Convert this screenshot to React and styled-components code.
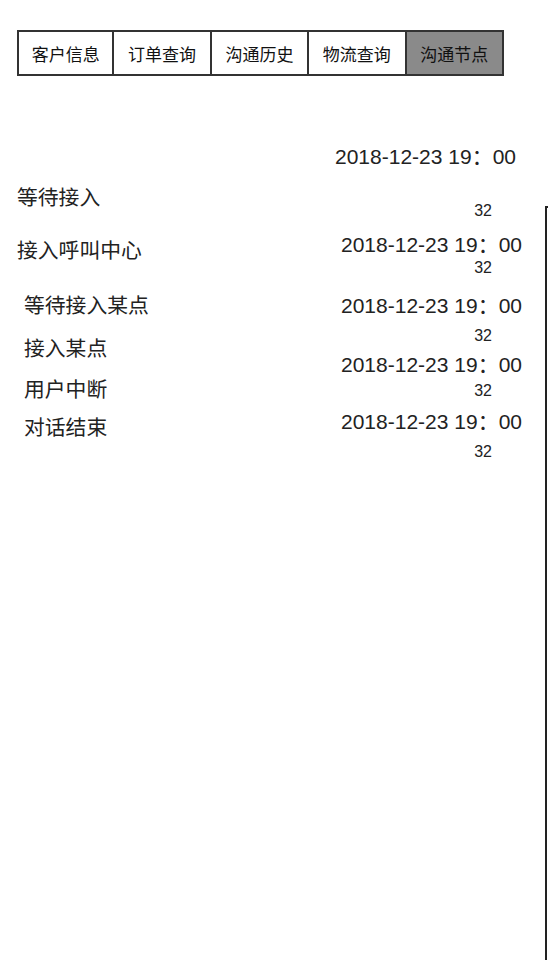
import React from "react";
import styled, { createGlobalStyle } from "styled-components";

const GlobalStyle = createGlobalStyle`
  html, body {
    margin: 0;
    padding: 0;
    background: #fff;
  }
  body {
    font-family: "Liberation Sans", "Noto Sans CJK SC", sans-serif;
    color: #222;
  }
`;

const Page = styled.div`
  display: flex;
  width: 548px;
  min-height: 960px;
  overflow: hidden;
`;

const Main = styled.div`
  width: 545px;
  flex-shrink: 0;
  padding-top: 30px;
  box-sizing: border-box;
`;

const SidePanel = styled.div`
  flex: 1;
  margin-top: 206px;
  border-left: 2px solid #222;
  border-top: 2px solid #222;
`;

const Tabs = styled.div`
  display: flex;
  margin-left: 17px;
`;

const Tab = styled.div`
  width: 97.4px;
  height: 46px;
  box-sizing: border-box;
  display: flex;
  align-items: center;
  justify-content: center;
  border: 2px solid #333;
  border-left: ${(p) => (p.$first ? "2px solid #333" : "none")};
  background: ${(p) => (p.$active ? "#8a8a8a" : "#fff")};
  font-family: "Noto Sans CJK SC", sans-serif;
  font-size: 17px;
  color: #111;
`;

const Timeline = styled.div`
  display: flex;
  justify-content: space-between;
  margin-top: 64px;
  padding-right: 23px;
`;

const Labels = styled.div`
  display: flex;
  flex-direction: column;
`;

const Label = styled.div`
  margin-top: ${(p) => p.$top}px;
  padding-left: ${(p) => (p.$indent ? 24 : 17)}px;
  font-family: "Noto Sans CJK SC", sans-serif;
  font-size: 20.8px;
  line-height: 24px;
  color: #222;
`;

const Times = styled.div`
  display: flex;
  flex-direction: column;
  align-items: flex-end;
`;

const Stamp = styled.div`
  margin-top: ${(p) => p.$top}px;
  margin-right: ${(p) => p.$shift}px;
  font-size: 21px;
  line-height: 24px;
  white-space: nowrap;
  color: #222;
`;

const Count = styled.div`
  margin-top: ${(p) => p.$top}px;
  margin-right: 30px;
  font-size: 16px;
  line-height: 18px;
  color: #222;
`;

const tabs = ["客户信息", "订单查询", "沟通历史", "物流查询", "沟通节点"];

const labels = [
  { text: "等待接入", top: 44 },
  { text: "接入呼叫中心", top: 29 },
  { text: "等待接入某点", top: 31, indent: true },
  { text: "接入某点", top: 19, indent: true },
  { text: "用户中断", top: 17, indent: true },
  { text: "对话结束", top: 14, indent: true },
];

const times = [
  { top: 5, count: 33, shift: 6 },
  { top: 13, count: 2, shift: 0 },
  { top: 17, count: 9, shift: 0 },
  { top: 8, count: 5, shift: 0 },
  { top: 10, count: 9, shift: 0 },
];

export default function App() {
  return (
    <>
      <GlobalStyle />
      <Page>
        <Main>
          <Tabs>
            {tabs.map((t, i) => (
              <Tab key={t} $first={i === 0} $active={i === tabs.length - 1}>
                {t}
              </Tab>
            ))}
          </Tabs>
          <Timeline>
            <Labels>
              {labels.map((l) => (
                <Label key={l.text} $top={l.top} $indent={l.indent}>
                  {l.text}
                </Label>
              ))}
            </Labels>
            <Times>
              {times.map((t, i) => (
                <React.Fragment key={i}>
                  <Stamp $top={t.top} $shift={t.shift}>
                    2018-12-23 19：00
                  </Stamp>
                  <Count $top={t.count}>32</Count>
                </React.Fragment>
              ))}
            </Times>
          </Timeline>
        </Main>
        <SidePanel />
      </Page>
    </>
  );
}
